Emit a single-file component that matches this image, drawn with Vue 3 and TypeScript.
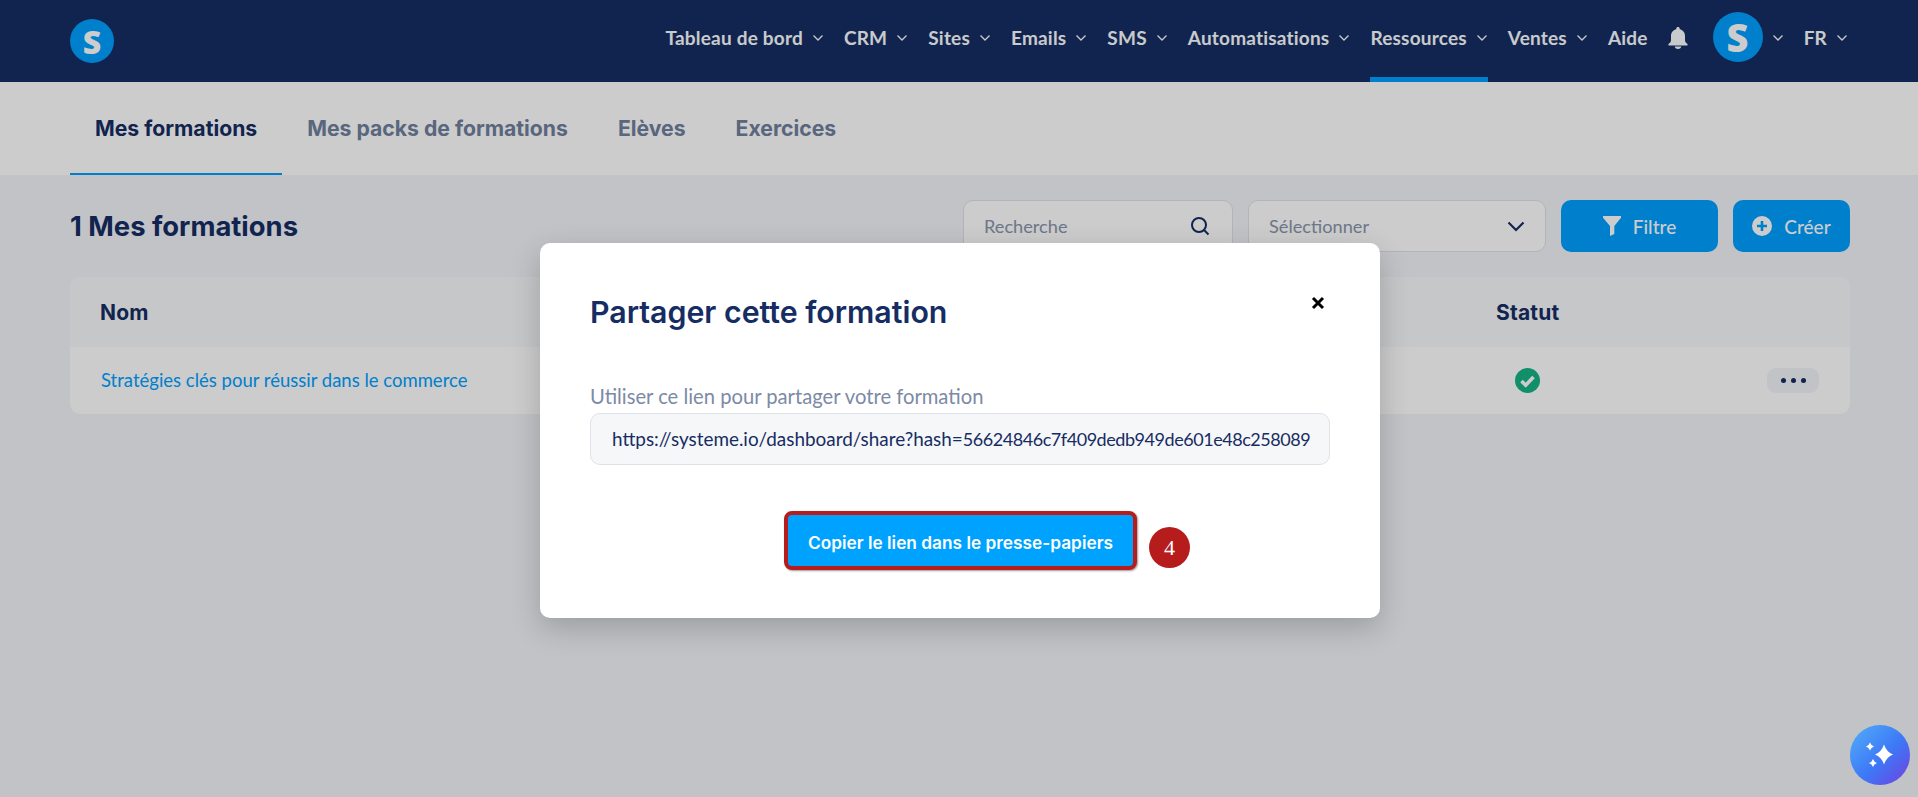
<script setup lang="ts">
interface NavItem {
  label: string
  active?: boolean
  chevron: boolean
}

const navItems: NavItem[] = [
  { label: 'Tableau de bord', chevron: true },
  { label: 'CRM', chevron: true },
  { label: 'Sites', chevron: true },
  { label: 'Emails', chevron: true },
  { label: 'SMS', chevron: true },
  { label: 'Automatisations', chevron: true },
  { label: 'Ressources', chevron: true, active: true },
  { label: 'Ventes', chevron: true },
  { label: 'Aide', chevron: false }
]

const tabs = ['Mes formations', 'Mes packs de formations', 'Elèves', 'Exercices']

const shareBase = 'https://systeme.io/dashboard/share?hash='
const shareHash = '56624846c7f409dedb949de601e48c258089'
</script>

<template>
  <div class="page">
    <header class="topbar">
      <div class="logo">S</div>
      <nav class="nav">
        <div v-for="item in navItems" :key="item.label" class="nav-item" :class="{ active: item.active }">
          <span>{{ item.label }}</span>
          <svg v-if="item.chevron" class="chev" viewBox="0 0 12 8"><path d="M1.5 1.5 6 6l4.5-4.5" /></svg>
        </div>
        <svg class="bell" viewBox="0 0 20 22">
          <path d="M10 0c1 0 1.700.7 1.700 1.600v.7C15 3 17 5.700 17 9v4.200c0 1.500.8 2.500 2.400 3.800.6.5.3 1.500-.5 1.500H1.100c-.8 0-1.100-1-.5-1.500C2.200 15.700 3 14.700 3 13.200V9c0-3.300 2-6 5.300-6.700v-.7C8.300.7 9 0 10 0Z" />
          <path d="M6.800 19.500h6.400c0 1.400-1.400 2.500-3.200 2.500s-3.200-1.100-3.200-2.500Z" />
        </svg>
        <div class="avatar">S</div>
        <svg class="chev avatar-chev" viewBox="0 0 12 8"><path d="M1.500 1.500 6 6l4.500-4.500" /></svg>
        <div class="nav-item lang">
          <span>FR</span>
          <svg class="chev" viewBox="0 0 12 8"><path d="M1.500 1.500 6 6l4.500-4.500" /></svg>
        </div>
      </nav>
    </header>

    <div class="tabs">
      <div v-for="(tab, i) in tabs" :key="tab" class="tab" :class="{ current: i === 0 }">{{ tab }}</div>
    </div>

    <main class="content">
      <div class="toolbar">
        <h1>1 Mes formations</h1>
        <div class="controls">
          <div class="field search">
            <span>Recherche</span>
            <svg viewBox="0 0 20 20" class="search-icon"><circle cx="9" cy="9" r="7" /><path d="m14 14 4.500 4.500" /></svg>
          </div>
          <div class="field select">
            <span>Sélectionner</span>
            <svg viewBox="0 0 18 11" class="select-icon"><path d="m1.500 1.500 7.500 7.500 7.500-7.500" /></svg>
          </div>
          <button class="btn filter">
            <svg viewBox="0 0 18 20" class="filter-icon"><path d="M0 0h18v1.800L11.300 10v8L7 20V10L0 1.800Z" /></svg>
            Filtre
          </button>
          <button class="btn create">
            <svg viewBox="0 0 20 20" class="plus-icon"><path fill-rule="evenodd" d="M10 0a10 10 0 1 1 0 20 10 10 0 0 1 0-20Zm-1.300 5v3.700H5v2.600h3.700V15h2.600v-3.700H15V8.700h-3.700V5Z" /></svg>
            Créer
          </button>
        </div>
      </div>

      <div class="table">
        <div class="row head">
          <div>Nom</div>
          <div>Statut</div>
          <div></div>
        </div>
        <div class="row body">
          <a class="course">Stratégies clés pour réussir dans le commerce</a>
          <div class="status">
            <svg viewBox="0 0 25 25"><circle cx="12.500" cy="12.500" r="12.500" fill="#16b386" /><path d="m6.500 13 4.200 4.200 7.800-8.200" fill="none" stroke="#fff" stroke-width="3.600" /></svg>
          </div>
          <div class="actions"><span class="dots"><i></i><i></i><i></i></span></div>
        </div>
      </div>
    </main>

    <div class="overlay">
      <section class="modal">
        <div class="modal-head">
          <h2>Partager cette formation</h2>
          <svg class="close" viewBox="0 0 14 14"><path d="m2 2 10 10M12 2 2 12" /></svg>
        </div>
        <label class="label">Utiliser ce lien pour partager votre formation</label>
        <div class="url"><span class="url-base">{{ shareBase }}</span><span class="url-hash">{{ shareHash }}</span></div>
        <div class="copy-row">
          <div class="copy-wrap">
            <button class="copy">Copier le lien dans le presse-papiers</button>
            <span class="step">4</span>
          </div>
        </div>
      </section>
    </div>

    <div class="assistant">
      <svg viewBox="0 0 30 30">
        <path d="M19 4.500Q21.500 12 28 14.500 21.500 17 19 24.500 16.500 17 10 14.500 16.500 12 19 4.500Z" />
        <path d="M5 2.500Q6 5.500 9 6.500 6 7.500 5 10.500 4 7.500 1 6.500 4 5.500 5 2.500Z" />
        <path d="M8 19Q9 22 12 23 9 24 8 27 7 24 4 23 7 22 8 19Z" />
      </svg>
    </div>
  </div>
</template>

<style>
html,
body {
  margin: 0;
  background: #f2f4f9;
}
</style>

<style scoped>
.page {
  position: relative;
  height: 797px;
  overflow: hidden;
  background: #f2f4f9;
  font-family: Inter, "Liberation Sans", sans-serif;
  color: #162d63;
}

.topbar {
  height: 82px;
  box-sizing: border-box;
  padding: 0 70px;
  background: #162d63;
  display: flex;
  align-items: center;
  justify-content: space-between;
}

.logo,
.avatar {
  border-radius: 50%;
  background: #00a0ff;
  color: #fff;
  display: flex;
  align-items: center;
  justify-content: center;
  font-family: "Open Sans", sans-serif;
  font-weight: 800;
}

.logo {
  width: 44px;
  height: 44px;
  font-size: 32px;
}

.avatar {
  width: 50px;
  height: 50px;
  font-size: 38px;
  margin-left: 5px;
  margin-bottom: 8px;
}

.nav {
  display: flex;
  align-items: center;
  height: 100%;
  gap: 20px;
  font-family: Lato, sans-serif;
  font-weight: 700;
  font-size: 19px;
  letter-spacing: 0.2px;
  color: #fbfdff;
}

.nav-item {
  position: relative;
  height: 100%;
  display: flex;
  align-items: center;
  gap: 9px;
  padding-bottom: 7px;
  box-sizing: border-box;
}

.nav-item.active::after {
  content: '';
  position: absolute;
  left: 0;
  right: 0;
  bottom: 0;
  height: 5px;
  background: #00a0ff;
}

.chev {
  width: 12px;
  height: 8px;
  fill: none;
  stroke: #fbfdff;
  stroke-width: 1.300;
}

.bell {
  width: 20px;
  height: 22px;
  fill: #fbfdff;
  margin-bottom: 6px;
}

.avatar-chev {
  margin-left: -11px;
  margin-bottom: 7px;
}

.tabs {
  height: 93px;
  box-sizing: border-box;
  padding: 0 70px;
  background: #fff;
  display: flex;
}

.tab {
  padding: 33px 25px 0;
  height: 93px;
  box-sizing: border-box;
  font-size: 21.200px;
  font-weight: 700;
  color: #6f809e;
}

.tab.current {
  color: #162d63;
  border-bottom: 2px solid #00a0ff;
}

.content {
  padding: 25px 68px 0 70px;
}

.toolbar {
  display: flex;
  justify-content: space-between;
  align-items: center;
  height: 52px;
}

h1 {
  margin: 0;
  font-size: 27.400px;
  font-weight: 700;
}

.controls {
  display: flex;
  gap: 15px;
}

.field {
  height: 52px;
  box-sizing: border-box;
  border: 1px solid #dfe2e8;
  border-radius: 10px;
  background: #fff;
  padding: 0 20px;
  display: flex;
  align-items: center;
  justify-content: space-between;
  font-family: Lato, sans-serif;
  font-size: 18.200px;
  color: #8995ad;
}

.search {
  width: 270px;
  padding-right: 22px;
}

.select {
  width: 298px;
}

.search-icon {
  width: 20px;
  height: 20px;
  fill: none;
  stroke: #162d63;
  stroke-width: 2;
}

.select-icon {
  width: 18px;
  height: 11px;
  fill: none;
  stroke: #162d63;
  stroke-width: 2.200;
}

.btn {
  height: 52px;
  border: 0;
  border-radius: 10px;
  background: #00a0ff;
  color: #fff;
  display: flex;
  align-items: center;
  justify-content: center;
  gap: 12px;
  font-family: Lato, sans-serif;
  font-size: 19px;
  font-weight: 500;
}

.filter {
  width: 157px;
}

.create {
  width: 117px;
}

.filter-icon {
  width: 18px;
  height: 20px;
  fill: #fff;
}

.plus-icon {
  width: 20px;
  height: 20px;
  fill: #fff;
}

.table {
  margin-top: 25px;
  border-radius: 10px;
  overflow: hidden;
  background: #fff;
}

.row {
  display: grid;
  grid-template-columns: 1396px 1fr 83px;
  align-items: center;
  padding-left: 30px;
}

.head {
  height: 70px;
  background: #f8f9fc;
  font-size: 21px;
  font-weight: 700;
  letter-spacing: 0.2px;
}

.body {
  height: 67px;
}

.course {
  color: #00a0ff;
  font-family: Lato, sans-serif;
  font-size: 18.500px;
  margin: 0 0 2px 1px;
}

.status {
  display: flex;
  padding-left: 19px;
}

.status svg {
  width: 25px;
  height: 25px;
}

.actions {
  display: flex;
}

.dots {
  width: 52px;
  height: 25px;
  border-radius: 9px;
  background: #f2f4f9;
  display: flex;
  align-items: center;
  justify-content: center;
  gap: 5px;
}

.dots i {
  width: 5px;
  height: 5px;
  border-radius: 50%;
  background: #162d63;
}

.overlay {
  position: absolute;
  inset: 0;
  background: rgba(0, 0, 0, 0.2);
  display: flex;
  justify-content: center;
  align-items: flex-start;
  padding-top: 243px;
  box-sizing: border-box;
}

.modal {
  width: 840px;
  height: 375px;
  box-sizing: border-box;
  margin-left: 2px;
  padding: 0 50px;
  border-radius: 10px;
  background: #fff;
  box-shadow: 0 10px 30px rgba(0, 0, 0, 0.2);
}

.modal-head {
  height: 128px;
  display: flex;
  justify-content: space-between;
  align-items: flex-start;
}

h2 {
  margin: 50px 0 0;
  font-size: 30.300px;
  line-height: 39px;
  font-weight: 600;
  color: #162d63;
}

.close {
  width: 14px;
  height: 14px;
  margin: 53px 5px 0 0;
  fill: none;
  stroke: #000;
  stroke-width: 3;
}

.label {
  display: block;
  height: 42px;
  line-height: 50px;
  font-family: Lato, sans-serif;
  font-size: 20.200px;
  color: #7c8aa5;
}

.url {
  height: 52px;
  box-sizing: border-box;
  border: 1px solid #dfe2e8;
  border-radius: 10px;
  background: #f6f7f9;
  padding: 0 21px;
  line-height: 50px;
  font-family: Lato, sans-serif;
  color: #162d63;
  white-space: nowrap;
}

.url-base {
  font-size: 18.900px;
}

.url-hash {
  font-size: 18px;
  letter-spacing: -0.45px;
}

.copy-row {
  display: flex;
  margin-top: 46px;
  padding-left: 194px;
}

.copy-wrap {
  position: relative;
}

.copy {
  display: block;
  width: 353px;
  height: 59px;
  box-sizing: border-box;
  padding-top: 4px;
  border: 4px solid #b71c1c;
  border-radius: 8px;
  background: #00a2ff;
  color: #fff;
  font-family: Inter, sans-serif;
  font-size: 17.300px;
  font-weight: 600;
  box-shadow: 1px 1px 2px rgba(0, 0, 0, 0.4);
}

.step {
  position: absolute;
  left: 365px;
  top: 16px;
  width: 41px;
  height: 41px;
  border-radius: 50%;
  background: #b71c1c;
  color: #fff;
  display: flex;
  align-items: center;
  justify-content: center;
  font-family: "Liberation Serif", serif;
  font-size: 22px;
}

.assistant {
  position: absolute;
  left: 1850px;
  top: 725px;
  width: 60px;
  height: 60px;
  border-radius: 50%;
  background: linear-gradient(135deg, #52aef8 0%, #3d78f7 55%, #7140dc 100%);
  display: flex;
  align-items: center;
  justify-content: center;
}

.assistant svg {
  width: 30px;
  height: 30px;
  fill: #fff;
}
</style>
